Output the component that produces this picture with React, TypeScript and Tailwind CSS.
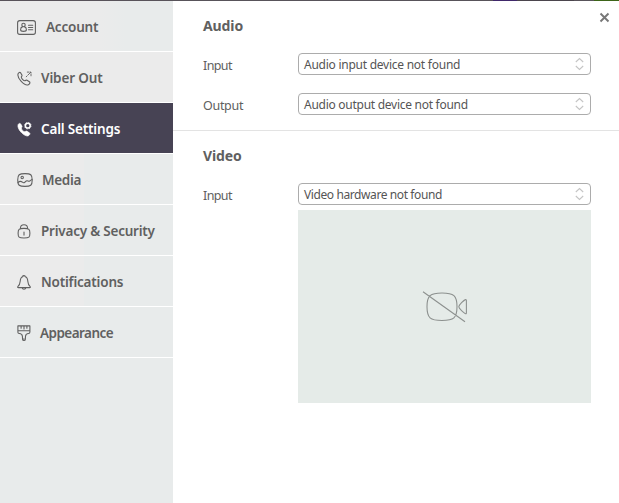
import type { ReactNode } from 'react';

const line = {
  fill: 'none',
  stroke: 'currentColor',
  strokeWidth: 1.1,
  strokeLinecap: 'round' as const,
  strokeLinejoin: 'round' as const,
};

const handset =
  'M1.2 2.5C1.8 1.3 3 1 3.7 1.9L4.9 4C5.3 4.8 4.8 5.3 4.3 5.9C4.2 7.4 6.4 9.8 8 9.8C8.7 9.2 9.3 8.9 10 9.3L12.4 10.8C13.5 11.6 12.6 13.1 11.4 13.7C9.5 14.6 6.4 12.7 4 10.1C1.7 7.6 .3 4.5 1.2 2.5Z';

const AccountIcon = () => (
  <svg width="19" height="15" viewBox="0 0 19 15" {...line}>
    <rect x=".6" y=".6" width="17.8" height="13.8" rx="2.2" />
    <circle cx="6.5" cy="5" r="1.7" />
    <path d="M5.4 6.9C4.2 7.2 3.6 8.4 3.6 9.7C3.6 11 4.8 11.4 6.5 11.4S9.4 11 9.4 9.7C9.4 8.4 8.8 7.2 7.6 6.9M11.5 5.2H15.7M11.5 7.5H15.7M11.5 9.8H15.7" />
  </svg>
);

const OutIcon = () => (
  <svg width="15" height="15" viewBox="0 0 15 15" {...line}>
    <path d={handset} />
    <path d="M9.2 5.8L10 5M10.9 4.1L13.6 1.4M10.3 1.1H11.8M13 1.1H14V2.1M14 3.3V4.8" strokeWidth=".9" />
  </svg>
);

const CallIcon = () => (
  <svg width="15" height="15" viewBox="0 0 15 15">
    <path d={handset} fill="currentColor" stroke="currentColor" strokeWidth=".7" />
    <circle cx="10.8" cy="3.7" r="2.4" fill="none" stroke="currentColor" strokeWidth="1.5" />
    <circle cx="10.8" cy="3.7" r="3.3" fill="none" stroke="currentColor" strokeWidth=".7" strokeDasharray="1.3 1.29" />
  </svg>
);

const MediaIcon = () => (
  <svg width="16" height="14" viewBox="0 0 16 14" {...line}>
    <path d="M8 .6C13.8 .6 15.2 1.6 15.2 7S13.8 13.4 8 13.4S.7 12.4 .7 7S2.2 .6 8 .6Z" />
    <circle cx="5.2" cy="4.5" r="1.2" />
    <path d="M1 9.5C2.6 8 4.1 8.1 5.4 9.2C6.7 10.3 7.6 9.7 8.7 8.4C10.2 6.7 11.1 8.6 12.2 8.3C13.2 8.1 13.8 7 15 6.5" />
  </svg>
);

const LockIcon = () => (
  <svg width="14" height="15" viewBox="0 0 14 15" {...line}>
    <path d="M7 4.4C12.2 4.4 12.9 5.2 12.9 9.2S12.2 14 7 14S1.1 13.2 1.1 9.2S1.8 4.4 7 4.4ZM3.4 4.5C3.4 1.8 4.8 .7 7 .7S10.6 1.8 10.6 4.5M7 8V11.1" />
  </svg>
);

const BellIcon = () => (
  <svg width="14" height="15" viewBox="0 0 14 15" {...line}>
    <path d="M5.7 1.7C5.7 .8 6.2 .6 7 .6S8.3 .8 8.3 1.7C10.3 2.3 10.7 4.1 10.8 6.3C11 9 11.9 10.6 13.2 11.7C13.6 12.3 13.2 12.6 12.6 12.6H1.4C.8 12.6 .4 12.3 .8 11.7C2.1 10.6 3 9 3.2 6.3C3.3 4.1 3.7 2.3 5.7 1.7ZM5.1 12.9C5.4 14 6 14.3 7 14.3S8.6 14 8.9 12.9" />
  </svg>
);

const BrushIcon = () => (
  <svg width="14" height="17" viewBox="0 0 14 17" {...line}>
    <path d="M.9 .9H12.9V7.1C12.9 8.1 12.4 8.5 11.5 8.5C9.6 8.6 8.7 9.5 8.5 11.2L8.3 14.4C8.2 15.9 5.7 15.9 5.6 14.4L5.4 11.2C5.2 9.5 4.3 8.6 2.3 8.5C1.3 8.5 .9 8.1 .9 7.1ZM1 5.8H12.8M4.1 1V3.3M7 1V4M9.9 1V3.3M6.9 13.8V14.1" />
  </svg>
);

const flat = 'bg-[#ebebeb]';
const split = 'bg-[linear-gradient(to_right,#ebebeb_84px,#e8ebeb_84px)]';

type Item = { label: string; icon: ReactNode; gap: string; track: string; bg: string; active?: boolean };

const items: Item[] = [
  { label: 'Account', icon: <AccountIcon />, gap: 'ml-[10px]', track: 'tracking-[-0.2px]', bg: 'bg-[linear-gradient(to_right,#ebebeb_100px,#e8ebeb_125px)]' },
  { label: 'Viber Out', icon: <OutIcon />, gap: 'ml-[9px]', track: 'tracking-[-0.12px]', bg: flat },
  { label: 'Call Settings', icon: <CallIcon />, gap: 'ml-[9px]', track: 'tracking-[-0.18px]', bg: 'bg-[#474354]', active: true },
  { label: 'Media', icon: <MediaIcon />, gap: 'ml-[9px]', track: 'tracking-[-0.3px]', bg: split },
  { label: 'Privacy & Security', icon: <LockIcon />, gap: 'ml-[10px]', track: 'tracking-[-0.22px]', bg: split },
  { label: 'Notifications', icon: <BellIcon />, gap: 'ml-[10px]', track: 'tracking-[-0.19px]', bg: split },
  { label: 'Appearance', icon: <BrushIcon />, gap: 'ml-[9px]', track: 'tracking-[-0.55px]', bg: 'bg-[#e8ebeb]' },
];

function Select({ value, track }: { value: string; track: string }) {
  return (
    <button className="flex h-[22px] w-[293px] items-center justify-between rounded-[4px] border border-[#acacac] bg-white pr-[6px] pl-[5px] text-left text-[12px] leading-[20px] text-[#555]">
      <span className={`pt-[2px] whitespace-nowrap ${track}`}>{value}</span>
      <svg width="9" height="14" viewBox="0 0 9 14" fill="none" stroke="#c5c5c5" strokeWidth="1.1">
        <path d="M.8 5L4.5 1.6L8.2 5M.8 9L4.5 12.4L8.2 9" />
      </svg>
    </button>
  );
}

function Field({ label, track, children }: { label: string; track: string; children: ReactNode }) {
  return (
    <div className="flex h-[22px]">
      <span className={`w-[95px] pt-[3px] text-[12.5px] leading-[20px] ${track}`}>{label}</span>
      {children}
    </div>
  );
}

export default function App() {
  return (
    <div className="flex h-[503px] w-[619px] flex-col overflow-hidden bg-white font-['Noto_Sans','Open_Sans',sans-serif] text-[#606060]">
      <div className="h-px shrink-0 bg-[linear-gradient(to_right,#58535a_493px,#40286a_493px,#40286a_517px,#4b454d_517px,#4b454d_574px,#58535a_574px,#58535a_594px,#3d6419_594px)]" />
      <div className="flex min-h-0 flex-1">
        <nav className="w-[173px] bg-[#e8ebeb]">
          {items.map((item) => (
            <div
              key={item.label}
              className={`flex h-[51px] items-center border-b border-white bg-clip-padding pl-[17px] text-[13.5px] leading-[20px] font-semibold whitespace-nowrap ${item.bg} ${item.active ? 'text-white' : 'text-[#606060]'}`}
            >
              <span className="shrink-0 pt-[2px]">{item.icon}</span>
              <span className={`pt-[2px] ${item.gap} ${item.track}`}>{item.label}</span>
            </div>
          ))}
        </nav>
        <main className="flex flex-1 flex-col">
          <section className="h-[130px] border-b border-[#e3e3e3] pl-[30px]">
            <div className="flex justify-between pt-[10px] pr-[9px]">
              <h2 className="pt-[5px] text-[14px] leading-[20px] font-bold tracking-[-0.1px]">Audio</h2>
              <button aria-label="Close" className="h-[13px]">
                <svg width="11" height="13" viewBox="0 0 11 13" stroke="#777" strokeWidth="1.9">
                  <path d="M1.5 2.5L9.5 10.5M9.5 2.5L1.5 10.5" />
                </svg>
              </button>
            </div>
            <div className="mt-[17px] flex flex-col gap-[18px]">
              <Field label="Input" track="tracking-[-0.6px]"><Select value="Audio input device not found" track="tracking-[-0.25px]" /></Field>
              <Field label="Output" track="tracking-[-0.3px]"><Select value="Audio output device not found" track="tracking-[-0.27px]" /></Field>
            </div>
          </section>
          <section className="pl-[30px]">
            <h2 className="pt-[15px] pb-[17px] text-[14px] leading-[20px] font-bold tracking-[-0.1px]">Video</h2>
            <Field label="Input" track="tracking-[-0.6px]"><Select value="Video hardware not found" track="tracking-[-0.4px]" /></Field>
            <div className="mt-[5px] ml-[95px] flex h-[193px] w-[293px] items-center justify-center bg-[#e5ebe8]">
              <svg width="46" height="32" viewBox="0 0 46 32" fill="none" stroke="#8d918f" strokeWidth="1.1">
                <path d="M20 2C31.8 2 35 4.5 35 15.8S31.8 29.5 20 29.5S5 27 5 15.8S8.2 2 20 2ZM36.8 15.8C36.8 14 42 9 43.4 8.6C44.3 8.5 44.4 8.7 44.4 9.7V21.7C44.4 22.8 44 23 43.2 22.6C42 21.8 36.8 17.5 36.8 15.8ZM1 .8L43 30.8" />
              </svg>
            </div>
          </section>
        </main>
      </div>
    </div>
  );
}
